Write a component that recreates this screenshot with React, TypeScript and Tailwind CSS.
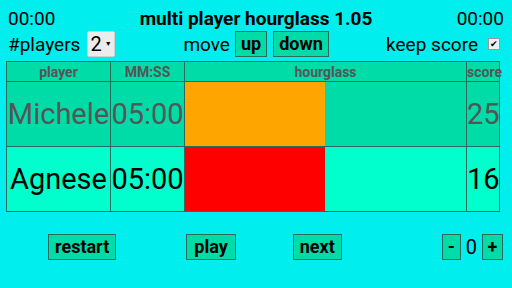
import React from 'react';

const Btn: React.FC<{ label: string; className?: string }> = ({ label, className = '' }) => (
  <button
    className={`h-[26px] bg-[#00dca8] border border-[#2f6a5c] font-bold text-[18px] leading-none text-black ${className}`}
  >
    {label}
  </button>
);

const App: React.FC = () => {
  const players = [
    { name: 'Michele', time: '05:00', score: 25, bar: 'bg-[#ffa500]', row: 'bg-[#00dca8]', text: 'text-[#555555]', fill: 140 },
    { name: 'Agnese', time: '05:00', score: 16, bar: 'bg-[#ff0000]', row: 'bg-[#00ffcc]', text: 'text-black', fill: 140 },
  ];

  return (
    <div className="w-[512px] h-[288px] bg-[#00eeee] font-['Roboto',sans-serif] text-black overflow-hidden">
      {/* Top bar */}
      <div className="flex items-center justify-between px-[8px] pt-[7px] h-[30px]">
        <span className="text-[19px] leading-none">00:00</span>
        <span className="text-[19px] font-bold leading-none">multi player hourglass 1.05</span>
        <span className="text-[19px] leading-none">00:00</span>
      </div>

      {/* Controls */}
      <div className="flex items-center h-[28px] px-[8px]">
        <span className="text-[19px] leading-none">#players</span>
        <div className="ml-[7px] h-[26px] w-[28px] bg-[#ececec] border border-[#d0d0d0] rounded-[2px] flex items-center pl-[2px]">
          <span className="text-[20px] leading-none">2</span>
          <span className="text-[7px] ml-[3px]">▼</span>
        </div>
        <span className="ml-[68px] text-[19px] leading-none">move</span>
        <Btn label="up" className="ml-[5px] px-[5px]" />
        <Btn label="down" className="ml-[6px] px-[5px]" />
        <span className="ml-auto text-[19px] leading-none">keep score</span>
        <span className="ml-[10px] mr-[4px] w-[12px] h-[12px] bg-[#eeeeee] border border-[#999] flex items-center justify-center text-[9px] leading-none">✔</span>
      </div>

      {/* Table */}
      <table className="ml-[6px] mt-[3px] border-collapse border border-[#2f6a5c] table-fixed w-[493px]">
        <colgroup>
          <col className="w-[104px]" />
          <col className="w-[74px]" />
          <col className="w-[282px]" />
          <col className="w-[33px]" />
        </colgroup>
        <thead>
          <tr className="bg-[#00dca8] h-[20px] text-[14px] leading-none font-bold text-[#555555]">
            <th className="border border-[#2f6a5c] p-0 font-bold">player</th>
            <th className="border border-[#2f6a5c] p-0 font-bold">MM:SS</th>
            <th className="border border-[#2f6a5c] p-0 font-bold">hourglass</th>
            <th className="border border-[#2f6a5c] p-0 font-bold">score</th>
          </tr>
        </thead>
        <tbody>
          {players.map((p) => (
            <tr key={p.name} className={`${p.row} h-[65px] ${p.text}`}>
              <td className="border border-[#2f6a5c] p-0 text-[29px] leading-none text-center whitespace-nowrap">{p.name}</td>
              <td className="border border-[#2f6a5c] p-0 text-[29px] leading-none text-center">{p.time}</td>
              <td className="border border-[#2f6a5c] p-0 h-[65px]">
                <div className={`${p.bar} h-full`} style={{ width: p.fill }} />
              </td>
              <td className="border border-[#2f6a5c] p-0 text-[29px] leading-none text-right">{p.score}</td>
            </tr>
          ))}
        </tbody>
      </table>

      {/* Bottom controls */}
      <div className="flex items-center mt-[22px] h-[26px]">
        <Btn label="restart" className="ml-[48px] px-[6px]" />
        <Btn label="play" className="ml-[70px] px-[7px]" />
        <Btn label="next" className="ml-[57px] px-[6px]" />
        <Btn label="-" className="ml-auto w-[19px] px-0" />
        <span className="mx-[5px] text-[20px] leading-none">0</span>
        <Btn label="+" className="mr-[9px] w-[21px] px-0" />
      </div>
    </div>
  );
};

export default App;
